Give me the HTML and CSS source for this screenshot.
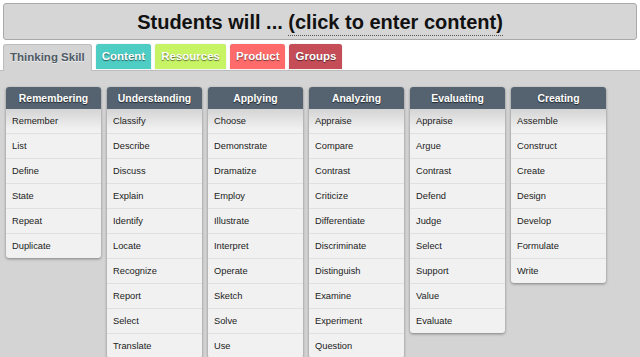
FILE: index.html
```html
<!DOCTYPE html>
<html lang="en">
<head>
    <meta charset="UTF-8">
    <title>Thinking Skills</title>
    <link rel="stylesheet" href="styles.css">
</head>
<body>

<div class="title-bar">
    Students will ... <span class="editable">(click to enter content)</span>
</div>

<div class="tabs">
    <div class="tab tab-active">Thinking Skill</div>
    <div class="tab tab-content">Content</div>
    <div class="tab tab-resources">Resources</div>
    <div class="tab tab-product">Product</div>
    <div class="tab tab-groups">Groups</div>
</div>

<div class="panel">
    <div class="skill">
        <div class="skill-head">Remembering</div>
        <ul>
            <li>Remember</li>
            <li>List</li>
            <li>Define</li>
            <li>State</li>
            <li>Repeat</li>
            <li>Duplicate</li>
        </ul>
    </div>
    <div class="skill">
        <div class="skill-head">Understanding</div>
        <ul>
            <li>Classify</li>
            <li>Describe</li>
            <li>Discuss</li>
            <li>Explain</li>
            <li>Identify</li>
            <li>Locate</li>
            <li>Recognize</li>
            <li>Report</li>
            <li>Select</li>
            <li>Translate</li>
        </ul>
    </div>
    <div class="skill">
        <div class="skill-head">Applying</div>
        <ul>
            <li>Choose</li>
            <li>Demonstrate</li>
            <li>Dramatize</li>
            <li>Employ</li>
            <li>Illustrate</li>
            <li>Interpret</li>
            <li>Operate</li>
            <li>Sketch</li>
            <li>Solve</li>
            <li>Use</li>
        </ul>
    </div>
    <div class="skill">
        <div class="skill-head">Analyzing</div>
        <ul>
            <li>Appraise</li>
            <li>Compare</li>
            <li>Contrast</li>
            <li>Criticize</li>
            <li>Differentiate</li>
            <li>Discriminate</li>
            <li>Distinguish</li>
            <li>Examine</li>
            <li>Experiment</li>
            <li>Question</li>
        </ul>
    </div>
    <div class="skill">
        <div class="skill-head">Evaluating</div>
        <ul>
            <li>Appraise</li>
            <li>Argue</li>
            <li>Contrast</li>
            <li>Defend</li>
            <li>Judge</li>
            <li>Select</li>
            <li>Support</li>
            <li>Value</li>
            <li>Evaluate</li>
        </ul>
    </div>
    <div class="skill">
        <div class="skill-head">Creating</div>
        <ul>
            <li>Assemble</li>
            <li>Construct</li>
            <li>Create</li>
            <li>Design</li>
            <li>Develop</li>
            <li>Formulate</li>
            <li>Write</li>
        </ul>
    </div>
</div>

</body>
</html>
```

FILE: styles.css
```css
body {
    margin: 0;
    background: #fff;
    font-family: "Liberation Sans", Arial, sans-serif;
    height: 100vh;
    display: flex;
    flex-direction: column;
    overflow: hidden;
}

.title-bar {
    margin: 3px 3px 0 3px;
    height: 35px;
    line-height: 36px;
    background: #d6d6d6;
    border: 1px solid #a9a9a9;
    border-radius: 3px;
    text-align: center;
    font-size: 20px;
    font-weight: bold;
    color: #111;
}
.editable {
    border-bottom: 1px dotted #555;
    padding-bottom: 2px;
}

.tabs {
    display: flex;
    gap: 4px;
    padding: 4px 3px 0 3px;
    height: 26px;
    flex-shrink: 0;
}
.tab {
    height: 25px;
    line-height: 25px;
    padding: 0 6px;
    font-size: 11.5px;
    font-weight: bold;
    color: #fff;
    border-radius: 3px 3px 0 0;
    text-shadow: 0 1px 1px rgba(0, 0, 0, 0.55);
    box-shadow: 0 0 1px rgba(0, 0, 0, 0.35);
}
/* the active tab sits on top of the panel */
.tab-active {
    height: 26px;
    background: #d4d4d4;
    color: #4f5a66;
    text-shadow: 0 1px 0 rgba(255, 255, 255, 0.6);
    border: 1px solid #bdbdbd;
    border-bottom: none;
    box-shadow: none;
    position: relative;
    z-index: 1;
}
.tab-content { background: #4ecdc4; }
.tab-resources { background: #c7f464; }
.tab-product { background: #ff6b6b; }
.tab-groups { background: #c44d58; }

.panel {
    flex: 1;
    min-height: 0;
    overflow: hidden;
    display: flex;
    align-items: flex-start;
    gap: 6px;
    padding: 16px 6px 0 6px;
    background: #d4d4d4;
    border-top: 1px solid #bdbdbd;
}

.skill {
    width: 95px;
    flex-shrink: 0;
    background: #f1f1f1;
    border-radius: 3px;
    box-shadow: 0 1px 3px rgba(0, 0, 0, 0.4);
    overflow: hidden;
}
.skill-head {
    height: 22px;
    line-height: 23px;
    background: #556270;
    color: #fff;
    text-align: center;
    font-size: 10.4px;
    font-weight: bold;
    text-shadow: 0 1px 1px rgba(0, 0, 0, 0.6);
}
.skill ul {
    list-style: none;
    margin: 0;
    padding: 0;
}
.skill li {
    height: 24px;
    line-height: 24px;
    padding-left: 6px;
    font-size: 9.3px;
    color: #222;
    border-bottom: 1px solid #e0e0e0;
}
.skill li:first-child {
    background: linear-gradient(#d4d4d4, #f1f1f1 85%);
}
.skill li:last-child {
    border-bottom: none;
}
```
